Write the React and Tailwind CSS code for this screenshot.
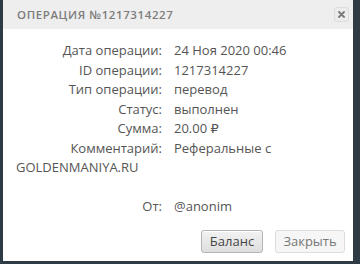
const rows = [
  { label: 'Дата операции:', value: '24 Ноя 2020 00:46' },
  { label: 'ID операции:', value: '1217314227' },
  { label: 'Тип операции:', value: 'перевод' },
  { label: 'Статус:', value: 'выполнен' },
  { label: 'Сумма:', value: '20.00 ₽' },
];

const Row = ({ label, children }) => (
  <div className="leading-[19.5px] flex">
    <span className="w-[158px] shrink-0 text-right pr-[12px]">{label}</span>
    <span>{children}</span>
  </div>
);

export default function App() {
  return (
    <div className="w-[360px] h-[264px] bg-[#2e3b44] pl-[3px] pr-[7px] pb-[3px] overflow-hidden" style={{ fontFamily: '"Open Sans", "DejaVu Sans", sans-serif' }}>
      <div className="bg-white h-[261px] flex flex-col">
        <div className="h-[29px] bg-[#eeeeee] flex items-center justify-between pl-[14px] pr-[4px]">
          <span className="text-[11.5px] font-semibold tracking-[0.6px] text-[#7c7c7c]">ОПЕРАЦИЯ №1217314227</span>
          <button className="w-[15px] h-[15px] rounded-[3px] border border-[#dcdcdc] bg-[#ececec] flex items-center justify-center">
            <svg width="7" height="7" viewBox="0 0 7 7">
              <path d="M1 1L6 6M6 1L1 6" stroke="#777" strokeWidth="1.8" strokeLinecap="round" />
            </svg>
          </button>
        </div>
        <div className="pl-[13px] pr-[12px] pt-[12px] text-[13px] text-[#555]">
          {rows.map((r) => (
            <Row key={r.label} label={r.label}>{r.value}</Row>
          ))}
          <Row label="Комментарий:">Реферальные с</Row>
          <div className="leading-[19.5px]">GOLDENMANIYA.RU</div>
          <div className="h-[19.5px]" />
          <Row label="От:">@anonim</Row>
        </div>
        <div className="mt-auto flex justify-end gap-[12px] pr-[8px] pb-[8px]">
          <button className="w-[62px] h-[23px] rounded-[3px] border border-[#b4b4b4] bg-gradient-to-b from-[#f2f2f2] to-[#dedede] text-[13px] text-[#444] shadow-[inset_0_1px_0_#fff]">
            Баланс
          </button>
          <button className="w-[70px] h-[23px] rounded-[3px] border border-[#dddddd] bg-[#f6f6f6] text-[13px] text-[#777]">
            Закрыть
          </button>
        </div>
      </div>
    </div>
  );
}
